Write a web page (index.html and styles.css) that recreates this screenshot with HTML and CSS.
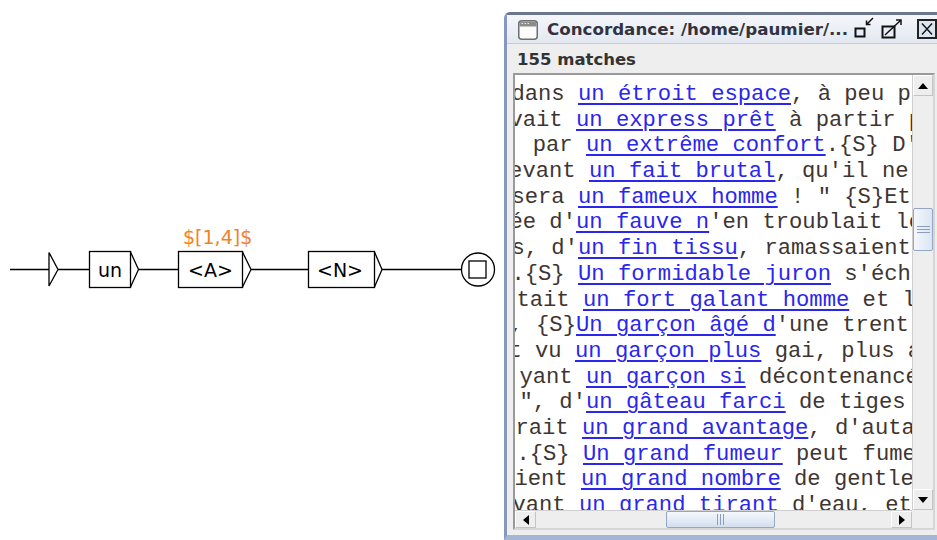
FILE: index.html
```html
<!DOCTYPE html>
<html lang="fr">
<head>
    <meta charset="UTF-8">
    <meta name="viewport" content="width=device-width, initial-scale=1.0">
    <title>Unitex - Concordance</title>
    <link rel="stylesheet" href="styles.css">
</head>
<body>
    <!-- Graph: un <A> <N> -->
    <div class="graph">
        <svg width="504" height="540" viewBox="0 0 504 540">
            <path class="edge" d="M10,269.5 H49 M58,269.5 H89.5 M138.5,269.5 H178.5 M251,269.5 H308.5 M382,269.5 H461.5"/>
            <path class="edge" d="M49,252.5 V286 L58,269.5 Z"/>

            <rect class="edge" x="89.5" y="251.5" width="41" height="36"/>
            <path class="edge" d="M130.5,252 L138.5,269.5 L130.5,287"/>
            <text class="box-text" x="110" y="277">un</text>

            <text class="output" x="183" y="244">$[1,4]$</text>
            <rect class="edge" x="178.5" y="251.5" width="64" height="36"/>
            <path class="edge" d="M242.5,252 L251,269.5 L242.5,287"/>
            <text class="box-text" x="210.5" y="277">&lt;A&gt;</text>

            <rect class="edge" x="308.5" y="251.5" width="66" height="36"/>
            <path class="edge" d="M374.5,252 L382,269.5 L374.5,287"/>
            <text class="box-text" x="340" y="277">&lt;N&gt;</text>

            <circle class="edge" cx="478" cy="269.5" r="16.5"/>
            <rect class="edge" x="469" y="261" width="17" height="17"/>
        </svg>
    </div>

    <!-- Concordance internal frame -->
    <div class="frame">
        <div class="frame-title">
            <svg class="frame-icon" width="20" height="20" viewBox="0 0 20 20">
                <rect x="0.75" y="0.75" width="18.5" height="18.5" rx="3" fill="#fbfbfb" stroke="#6f6f6f" stroke-width="1.5"/>
                <path d="M1.5,4 Q1.5,1.5 4,1.5 H16 Q18.5,1.5 18.5,4 V6.5 H1.5 Z" fill="#8b8b8b"/>
                <path d="M3.5,3.5 H5 M6.5,3.5 H8 M9.5,3.5 H11" stroke="#e8e8e8" stroke-width="1"/>
            </svg>
            <span class="frame-name">Concordance: /home/paumier/...</span>
            <div class="frame-buttons">
                <svg width="21" height="24" viewBox="0 0 21 24">
                    <rect x="2.5" y="11.5" width="9" height="8" fill="#e8eef8" stroke="#111" stroke-width="2"/>
                    <path d="M20,1 L13.5,7.5 M13.5,3.5 V7.5 H17.5" fill="none" stroke="#111" stroke-width="1.5"/>
                </svg>
                <svg width="23" height="24" viewBox="0 0 23 24">
                    <rect x="2.5" y="9.5" width="12" height="11" fill="#e8eef8" stroke="#111" stroke-width="2"/>
                    <path d="M5,18 L21,3 M16,3 H21 V8" fill="none" stroke="#111" stroke-width="1.5"/>
                </svg>
                <svg width="20" height="24" viewBox="0 0 20 24">
                    <rect x="1" y="3" width="18" height="18" fill="#dbe4f1" stroke="#222" stroke-width="2"/>
                    <path d="M5,6.5 L15,17.5 M15,6.5 L5,17.5" stroke="#111" stroke-width="1.4"/>
                </svg>
            </div>
        </div>

        <div class="frame-body">
            <div class="match-count">155 matches</div>
            <div class="scroll-pane">
                <div class="viewport">
                    <div class="line" style="text-indent:-3.6px">dans <a>un étroit espace</a>, à peu p</div>
                    <div class="line" style="text-indent:-5.6px">vait <a>un express prêt</a> à partir p</div>
                    <div class="line" style="text-indent:4.4px"> par <a>un extrême confort</a>.{S} D'</div>
                    <div class="line" style="text-indent:-5.9px">evant <a>un fait brutal</a>, qu'il ne </div>
                    <div class="line" style="text-indent:-3.6px">sera <a>un fameux homme</a> ! " {S}Et</div>
                    <div class="line" style="text-indent:-5.6px">ée d'<a>un fauve n</a>'en troublait le</div>
                    <div class="line" style="text-indent:-3.6px">s, d'<a>un fin tissu</a>, ramassaient </div>
                    <div class="line" style="text-indent:-3.6px">.{S} <a>Un formidable juron</a> s'écha</div>
                    <div class="line" style="text-indent:1.4px">tait <a>un fort galant homme</a> et l</div>
                    <div class="line" style="text-indent:-5.6px">, {S}<a>Un garçon âgé d</a>'une trent</div>
                    <div class="line" style="text-indent:-6.6px">t vu <a>un garçon plus</a> gai, plus a</div>
                    <div class="line" style="text-indent:4.4px">yant <a>un garçon si</a> décontenancé</div>
                    <div class="line" style="text-indent:4.4px">", d'<a>un gâteau farci</a> de tiges </div>
                    <div class="line" style="text-indent:0.4px">rait <a>un grand avantage</a>, d'auta</div>
                    <div class="line" style="text-indent:1.4px">.{S} <a>Un grand fumeur</a> peut fume</div>
                    <div class="line" style="text-indent:-0.6px">ient <a>un grand nombre</a> de gentle</div>
                    <div class="line" style="text-indent:-2.6px">vant <a>un grand tirant</a> d'eau, et</div>
                </div>

                <div class="vbar">
                    <div class="sb-button"><span class="arrow-up"></span></div>
                    <div class="sb-track">
                        <div class="vthumb"><span class="grip-h"></span></div>
                    </div>
                    <div class="sb-button"><span class="arrow-down"></span></div>
                </div>

                <div class="hbar">
                    <div class="sb-button"><span class="arrow-left"></span></div>
                    <div class="sb-track">
                        <div class="hthumb"><span class="grip-v"></span></div>
                    </div>
                    <div class="sb-button"><span class="arrow-right"></span></div>
                </div>

                <div class="corner"></div>
            </div>
        </div>
    </div>
</body>
</html>
```

FILE: styles.css
```css
/* Page: graph on the left, concordance frame on the right */
body {
    margin: 0;
    width: 937px;
    height: 540px;
    overflow: hidden;
    display: flex;
    background: #ffffff;
    font-family: "DejaVu Sans", sans-serif;
}

/* Graph */
.graph {
    flex: 0 0 504px;
}
.graph svg {
    display: block;
}
.edge {
    fill: none;
    stroke: #000000;
    stroke-width: 1.3;
}
.box-text {
    font-family: "DejaVu Sans", sans-serif;
    font-size: 19px;
    text-anchor: middle;
    fill: #000000;
}
.output {
    font-family: "DejaVu Sans", sans-serif;
    font-size: 19px;
    fill: #f28226;
}

/* Internal frame */
.frame {
    flex: 0 0 433px;
    margin-top: 12px;
    height: 528px;
    box-sizing: border-box;
    display: flex;
    flex-direction: column;
    border-top: 3px solid #6b7690;
    border-left: 3px solid #8898bd;
    border-bottom: 5px solid #a4b5d6;
    border-top-left-radius: 6px;
    background: #eeeeee;
}
.frame-title {
    height: 28px;
    flex: 0 0 28px;
    display: flex;
    align-items: center;
    padding-left: 11px;
    background: linear-gradient(#f4f6fa, #e3e8f1);
    border-bottom: 1px solid #c3cbd9;
}
.frame-icon {
    flex: 0 0 20px;
    margin-top: 2px;
}
.frame-name {
    margin-left: 9px;
    font-weight: bold;
    font-size: 16.7px;
    color: #333340;
    white-space: nowrap;
}
.frame-buttons {
    margin-left: auto;
    align-self: flex-start;
    padding-top: 2px;
    display: flex;
}
.frame-buttons svg {
    display: block;
}
.frame-buttons svg + svg {
    margin-left: 6px;
}
.frame-buttons svg:last-child {
    margin-left: 14px;
}

.frame-body {
    flex: 1;
    display: flex;
    flex-direction: column;
    padding: 0 2px 5px 6px;
}
.match-count {
    height: 26px;
    padding: 3px 0 0 4px;
    line-height: 26px;
    font-weight: bold;
    font-size: 16.5px;
    color: #333333;
}

/* Scroll pane with the concordance text */
.scroll-pane {
    height: 457px;
    box-sizing: border-box;
    display: grid;
    grid-template-columns: 397px 21px;
    grid-template-rows: 435px 18px;
    border: 2px solid #9a9a9a;
    border-right-color: #d6d6d6;
    border-bottom-color: #d6d6d6;
    box-shadow: inset 1px 1px 0 #6e6e6e;
}
.viewport {
    overflow: hidden;
    background: #ffffff;
    padding-top: 7px;
    font-family: "Liberation Mono", "DejaVu Sans Mono", monospace;
    font-size: 22.2px;
    color: #3e3532;
}
.line {
    height: 25.7px;
    line-height: 25.7px;
    white-space: pre;
}
.line a {
    color: #2a26ee;
    text-decoration: underline;
    text-decoration-thickness: 2px;
    text-underline-offset: 3px;
}

/* Scrollbars */
.vbar {
    display: flex;
    flex-direction: column;
    background: #eeeeee;
    border-left: 1px solid #cfcfcf;
}
.hbar {
    display: flex;
    background: #eeeeee;
    border-top: 1px solid #cfcfcf;
}
.corner {
    background: #eeeeee;
}
.sb-button {
    flex: 0 0 21px;
    display: flex;
    align-items: center;
    justify-content: center;
    background: #eeeeee;
    border: 1px solid #ffffff;
    border-right-color: #c4c4c4;
    border-bottom-color: #c4c4c4;
    box-sizing: border-box;
}
.sb-track {
    flex: 1;
    display: flex;
}
.vbar .sb-track {
    flex-direction: column;
}
.vthumb {
    margin-top: 112px;
    height: 41px;
    display: flex;
    align-items: center;
    justify-content: center;
    background: linear-gradient(90deg, #f5f8fc, #dbe5f2);
    border: 1px solid #95a6c4;
    border-radius: 2px;
}
.hthumb {
    margin-left: 130px;
    width: 107px;
    display: flex;
    align-items: center;
    justify-content: center;
    background: linear-gradient(#f5f8fc, #d3dfef);
    border: 1px solid #95a6c4;
    border-radius: 2px;
}
.grip-h {
    width: 13px;
    height: 7px;
    border-top: 1px solid #8c9dbd;
    border-bottom: 1px solid #8c9dbd;
    background: linear-gradient(#8c9dbd, #8c9dbd) center / 100% 1px no-repeat;
    box-sizing: border-box;
}
.grip-v {
    width: 7px;
    height: 11px;
    border-left: 1px solid #8c9dbd;
    border-right: 1px solid #8c9dbd;
    background: linear-gradient(#8c9dbd, #8c9dbd) center / 1px 100% no-repeat;
    box-sizing: border-box;
}
.arrow-up, .arrow-down, .arrow-left, .arrow-right {
    width: 0;
    height: 0;
    border: 5px solid transparent;
}
.arrow-up {
    border-bottom: 6px solid #000000;
    border-top-width: 0;
}
.arrow-down {
    border-top: 6px solid #000000;
    border-bottom-width: 0;
}
.arrow-left {
    border-right: 6px solid #000000;
    border-left-width: 0;
}
.arrow-right {
    border-left: 6px solid #000000;
    border-right-width: 0;
}
```
